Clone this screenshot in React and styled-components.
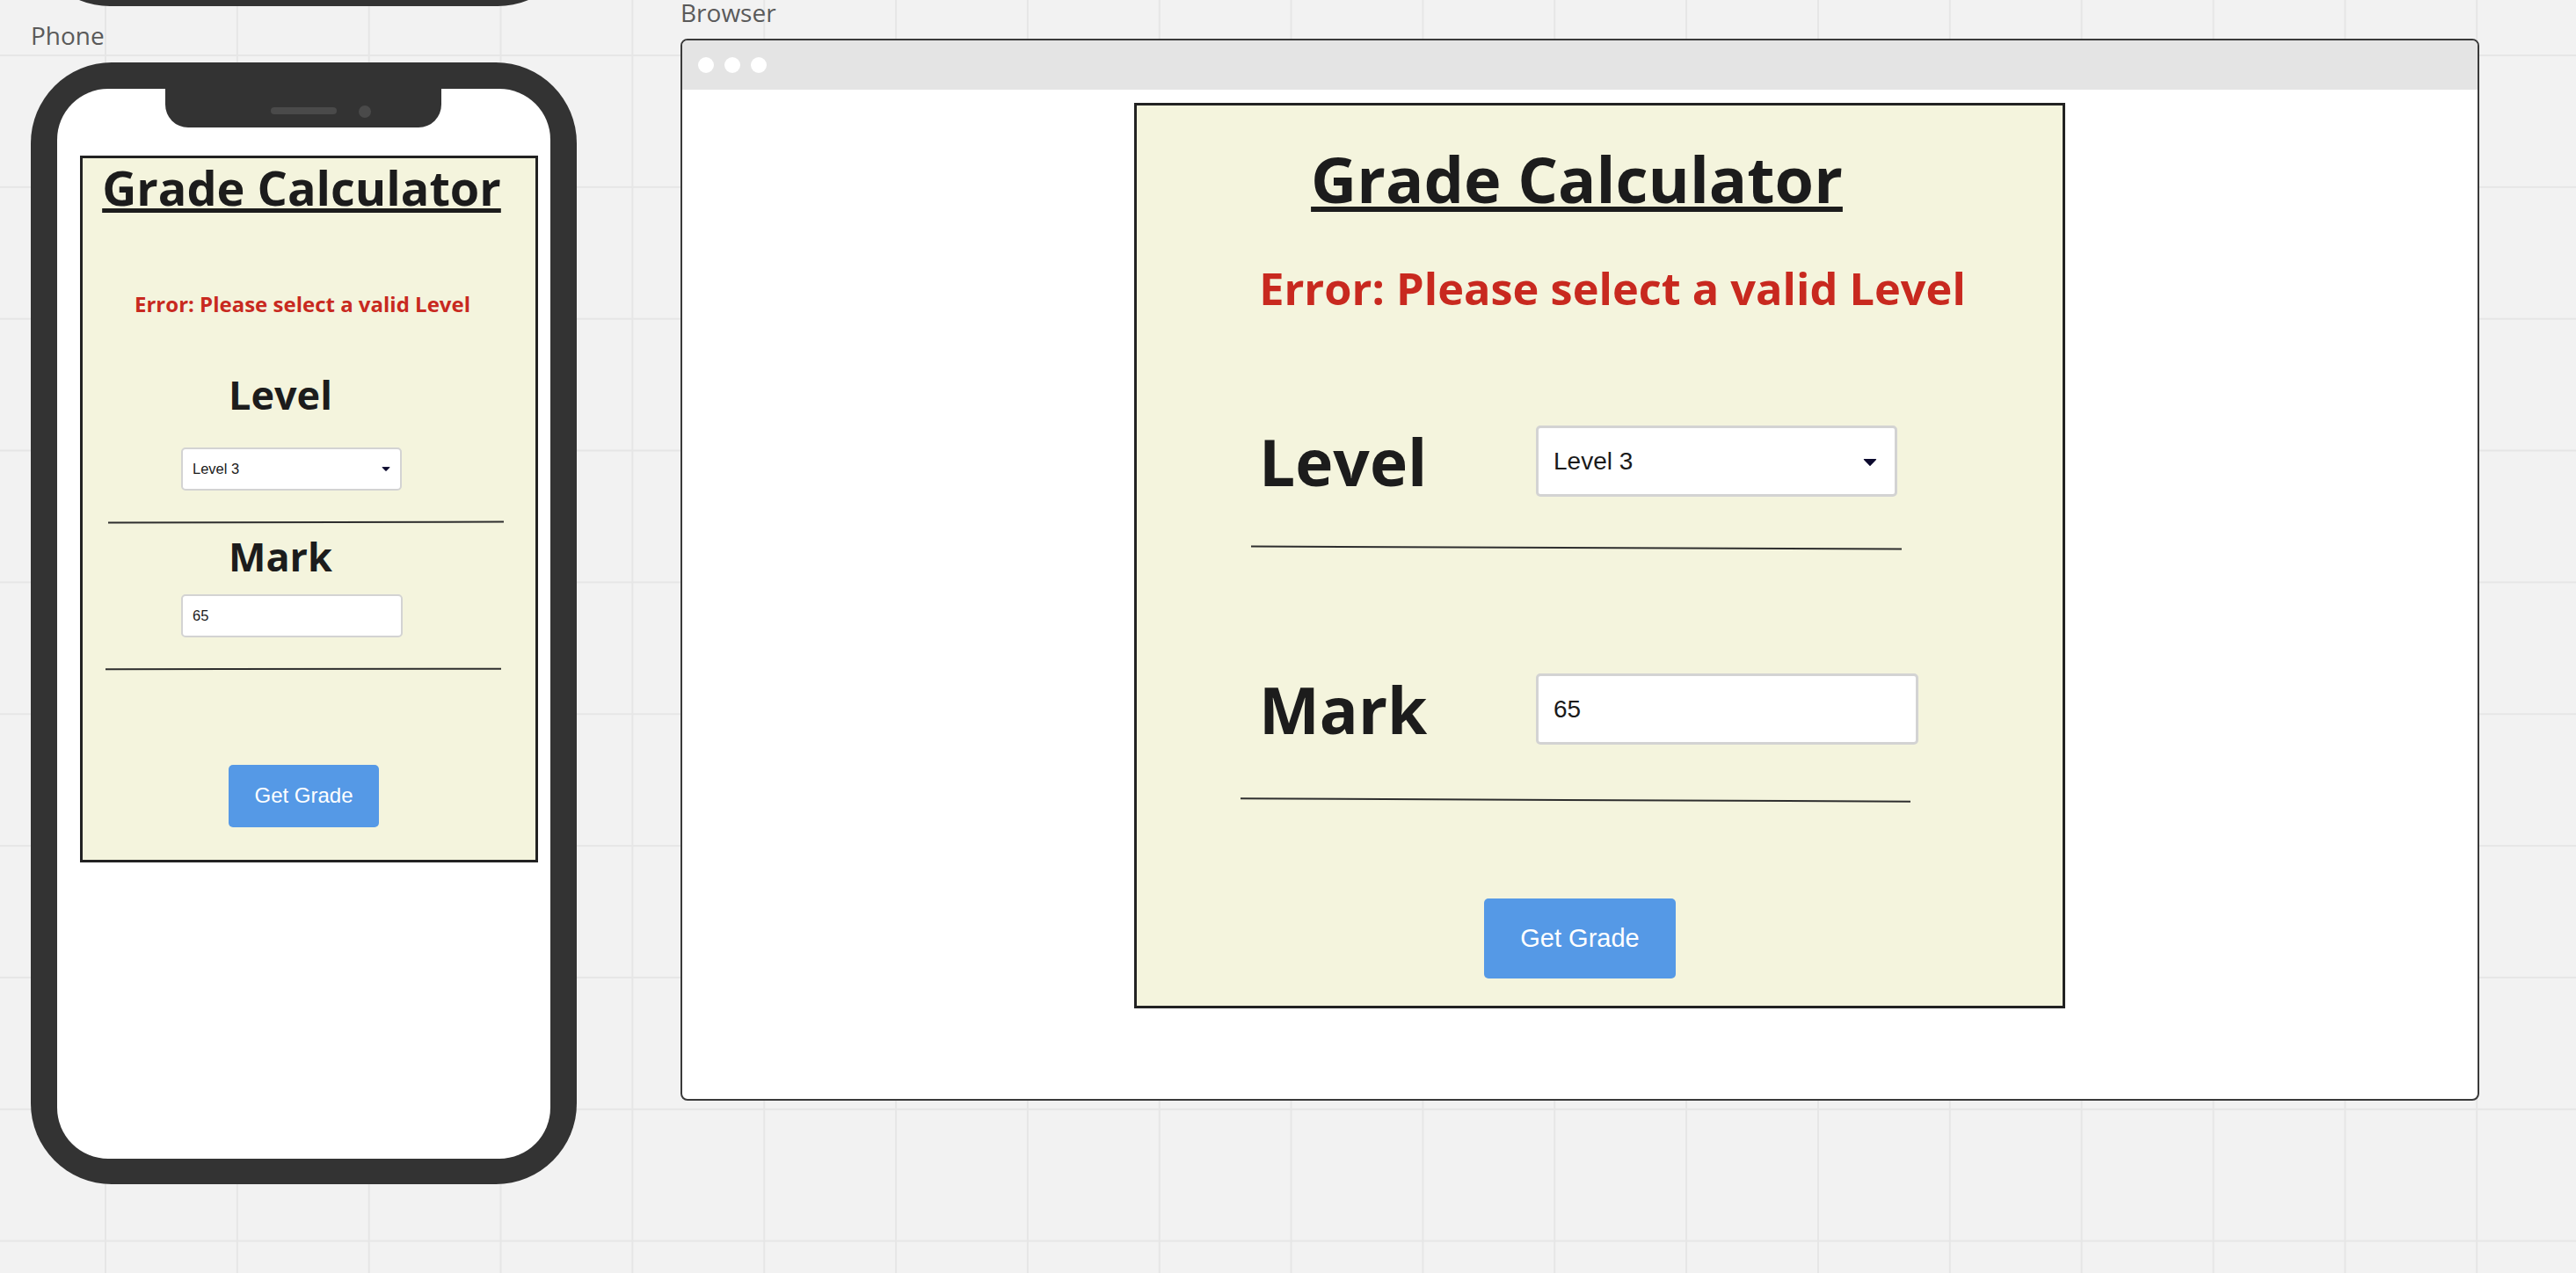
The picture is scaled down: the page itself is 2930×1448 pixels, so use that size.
import styled, { createGlobalStyle } from "styled-components";

const GlobalStyle = createGlobalStyle`
  html, body {
    margin: 0;
    padding: 0;
  }
  body {
    width: 2930px;
    height: 1448px;
    overflow: hidden;
    background-color: #f2f2f2;
    background-image: linear-gradient(to right, #e6e6e6 2px, transparent 2px),
      linear-gradient(to bottom, #e6e6e6 2px, transparent 2px);
    background-size: 149.85px 149.85px;
    background-position: 119px 62px;
    font-family: "Open Sans", "Noto Sans", sans-serif;
  }
`;

// sizes for the two copies of the form (phone mockup / browser mockup)
const PHONE = {
  cardW: 521,
  cardH: 804,
  cardLeft: 26,
  cardTop: 32,
  border: 3,
  title: { size: 54, lh: 60, top: 3, padL: 0, padR: 17, ul: 4.5, off: 3 },
  error: { size: 24, lh: 30, top: 88, padL: 0, padR: 15 },
  labelSize: 45,
  ctrl: { font: 16.5, border: 2, padL: 11, caretW: 10, caretH: 6, caretR: 13 },
  level: { top: 63, stacked: true, labelLeft: 166, labelLh: 50, gap: 34.5, ctrlLeft: 112, w: 251, h: 49 },
  div1: { top: 35, left: 29, w: 450, tilt: -0.1 },
  mark: { top: 13.5, stacked: true, labelLeft: 166, labelLh: 50, gap: 17.5, ctrlLeft: 112, w: 252, h: 49 },
  div2: { top: 35, left: 26, w: 450, tilt: -0.05 },
  button: { top: 108, left: 166, w: 171, h: 71, font: 24 },
};

const BROWSER = {
  cardW: 1059,
  cardH: 1030,
  cardLeft: 514,
  cardTop: 15,
  border: 3,
  title: { size: 72, lh: 90, top: 38, padL: 0, padR: 52, ul: 6, off: 4 },
  error: { size: 50.5, lh: 60, top: 50, padL: 29, padR: 0 },
  labelSize: 73,
  ctrl: { font: 28, border: 3, padL: 17, caretW: 16, caretH: 9, caretR: 23 },
  level: { top: 126, stacked: false, labelLeft: 139, labelW: 315, w: 411, h: 81 },
  div1: { top: 57, left: 130, w: 740, tilt: 0.22 },
  mark: { top: 142, stacked: false, labelLeft: 139, labelW: 315, w: 435, h: 81 },
  div2: { top: 62, left: 118, w: 762, tilt: 0.26 },
  button: { top: 111, left: 395, w: 218, h: 91, font: 29 },
};

const Canvas = styled.div`
  display: flex;
  align-items: flex-start;
`;

const Column = styled.div`
  display: flex;
  flex-direction: column;
  align-items: flex-start;
  margin-left: ${(p) => p.$left}px;
`;

const FrameLabel = styled.div`
  margin-top: ${(p) => p.$top}px;
  height: 24px;
  font-family: "Open Sans", sans-serif;
  font-size: 28px;
  line-height: 24px;
  color: #5a5a5a;
`;

const StubDevice = styled.div`
  width: 621px;
  height: 200px;
  margin-top: -193px;
  background: #333333;
  border-radius: 0 0 90px 90px;
`;

const PhoneBody = styled.div`
  box-sizing: border-box;
  width: 621px;
  height: 1276px;
  margin-top: 19px;
  padding: 30px 30px 29px 30px;
  background: #333333;
  border-radius: 92px;
`;

const Screen = styled.div`
  height: 100%;
  display: flex;
  flex-direction: column;
  align-items: flex-start;
  background: #ffffff;
  border-radius: 58px;
`;

const Notch = styled.div`
  box-sizing: border-box;
  width: 314px;
  height: 44px;
  margin-left: 123px;
  padding: 5px 0 0 120px;
  display: flex;
  align-items: center;
  gap: 25px;
  background: #333333;
  border-radius: 0 0 26px 26px;
`;

const Speaker = styled.span`
  width: 75px;
  height: 8px;
  border-radius: 4px;
  background: #4a4a4a;
`;

const Camera = styled.span`
  width: 14px;
  height: 14px;
  margin-top: 3px;
  border-radius: 50%;
  background: #4a4a4a;
`;

const BrowserWindow = styled.div`
  box-sizing: border-box;
  width: 2046px;
  height: 1208px;
  margin-top: 18px;
  display: flex;
  flex-direction: column;
  background: #ffffff;
  border: 2px solid #3a3a3a;
  border-radius: 8px;
  overflow: hidden;
`;

const TitleBar = styled.div`
  height: 56px;
  flex: none;
  display: flex;
  align-items: center;
  gap: 12px;
  padding-left: 18px;
  background: #e4e4e4;
`;

const Dot = styled.span`
  width: 18px;
  height: 18px;
  border-radius: 50%;
  background: #ffffff;
`;

const Viewport = styled.div`
  flex: 1;
  display: flex;
  flex-direction: column;
  align-items: flex-start;
`;

const Card = styled.div`
  box-sizing: border-box;
  width: ${(p) => p.$m.cardW}px;
  height: ${(p) => p.$m.cardH}px;
  margin: ${(p) => p.$m.cardTop}px 0 0 ${(p) => p.$m.cardLeft}px;
  display: flex;
  flex-direction: column;
  align-items: flex-start;
  background: #f4f4dd;
  border: ${(p) => p.$m.border}px solid #222222;
`;

const Title = styled.h1`
  align-self: stretch;
  margin: ${(p) => p.$t.top}px 0 0;
  padding: 0 ${(p) => p.$t.padR}px 0 ${(p) => p.$t.padL}px;
  font-family: "Open Sans", sans-serif;
  font-weight: 700;
  font-size: ${(p) => p.$t.size}px;
  line-height: ${(p) => p.$t.lh}px;
  text-align: center;
  white-space: nowrap;
  color: #1c1c1c;
  text-decoration: underline;
  text-decoration-thickness: ${(p) => p.$t.ul}px;
  text-underline-offset: ${(p) => p.$t.off}px;
`;

const ErrorText = styled.p`
  align-self: stretch;
  margin: ${(p) => p.$e.top}px 0 0;
  padding: 0 ${(p) => p.$e.padR}px 0 ${(p) => p.$e.padL}px;
  font-family: "Open Sans", sans-serif;
  font-weight: 700;
  font-size: ${(p) => p.$e.size}px;
  line-height: ${(p) => p.$e.lh}px;
  text-align: center;
  white-space: nowrap;
  color: #c8291f;
`;

const FieldRow = styled.div`
  margin-top: ${(p) => p.$f.top}px;
  display: flex;
  flex-direction: ${(p) => (p.$f.stacked ? "column" : "row")};
  align-items: ${(p) => (p.$f.stacked ? "flex-start" : "center")};
  padding-left: ${(p) => (p.$f.stacked ? 0 : p.$f.labelLeft)}px;
`;

const FieldLabel = styled.label`
  box-sizing: border-box;
  width: ${(p) => (p.$f.stacked ? "auto" : `${p.$f.labelW}px`)};
  margin-left: ${(p) => (p.$f.stacked ? p.$f.labelLeft : 0)}px;
  font-family: "Open Sans", sans-serif;
  font-weight: 700;
  font-size: ${(p) => p.$size}px;
  line-height: ${(p) => (p.$f.stacked ? `${p.$f.labelLh}px` : 1)};
  color: #1c1c1c;
`;

const Control = styled.div`
  position: relative;
  width: ${(p) => p.$f.w}px;
  height: ${(p) => p.$f.h}px;
  margin: ${(p) => (p.$f.stacked ? p.$f.gap : 0)}px 0 0
    ${(p) => (p.$f.stacked ? p.$f.ctrlLeft : 0)}px;
`;

const fieldStyle = (p) => `
  box-sizing: border-box;
  width: 100%;
  height: 100%;
  margin: 0;
  padding: 0 0 0 ${p.$c.padL}px;
  appearance: none;
  outline: none;
  background: #ffffff;
  border: ${p.$c.border}px solid #d3d3d3;
  border-radius: 5px;
  font-family: "Liberation Sans", Arial, sans-serif;
  font-size: ${p.$c.font}px;
  color: #1a1a1a;
`;

const Select = styled.select`
  ${fieldStyle}
`;

const TextInput = styled.input`
  ${fieldStyle}
`;

const Caret = styled.svg`
  position: absolute;
  top: 50%;
  right: ${(p) => p.$c.caretR}px;
  transform: translateY(-40%);
  pointer-events: none;
`;

const Divider = styled.hr`
  box-sizing: border-box;
  width: ${(p) => p.$d.w}px;
  height: 2px;
  margin: ${(p) => p.$d.top}px 0 0 ${(p) => p.$d.left}px;
  border: none;
  background: #2e2e2e;
  transform: rotate(${(p) => p.$d.tilt}deg);
`;

const GradeButton = styled.button`
  width: ${(p) => p.$b.w}px;
  height: ${(p) => p.$b.h}px;
  margin: ${(p) => p.$b.top}px 0 0 ${(p) => p.$b.left}px;
  padding: 0;
  border: none;
  border-radius: 5px;
  background: #5599e6;
  color: #ffffff;
  font-family: "Liberation Sans", Arial, sans-serif;
  font-size: ${(p) => p.$b.font}px;
  cursor: pointer;
`;

function GradeCard({ m }) {
  return (
    <Card $m={m}>
      <Title $t={m.title}>Grade Calculator</Title>
      <ErrorText $e={m.error}>Error: Please select a valid Level</ErrorText>
      <FieldRow $f={m.level}>
        <FieldLabel $f={m.level} $size={m.labelSize}>
          Level
        </FieldLabel>
        <Control $f={m.level}>
          <Select $c={m.ctrl} defaultValue="3">
            <option value="1">Level 1</option>
            <option value="2">Level 2</option>
            <option value="3">Level 3</option>
          </Select>
          <Caret
            $c={m.ctrl}
            width={m.ctrl.caretW}
            height={m.ctrl.caretH}
            viewBox="0 0 16 9"
          >
            <path
              d="M1.5 1.2 H14.5 L8 7.8 Z"
              fill="#0c0a2e"
              stroke="#0c0a2e"
              strokeWidth="1.4"
              strokeLinejoin="round"
            />
          </Caret>
        </Control>
      </FieldRow>
      <Divider $d={m.div1} />
      <FieldRow $f={m.mark}>
        <FieldLabel $f={m.mark} $size={m.labelSize}>
          Mark
        </FieldLabel>
        <Control $f={m.mark}>
          <TextInput $c={m.ctrl} defaultValue="65" />
        </Control>
      </FieldRow>
      <Divider $d={m.div2} />
      <GradeButton $b={m.button}>Get Grade</GradeButton>
    </Card>
  );
}

export default function App() {
  return (
    <>
      <GlobalStyle />
      <Canvas>
        <Column $left={35}>
          <StubDevice />
          <FrameLabel $top={21}>Phone</FrameLabel>
          <PhoneBody>
            <Screen>
              <Notch>
                <Speaker />
                <Camera />
              </Notch>
              <GradeCard m={PHONE} />
            </Screen>
          </PhoneBody>
        </Column>
        <Column $left={118}>
          <FrameLabel $top={2}>Browser</FrameLabel>
          <BrowserWindow>
            <TitleBar>
              <Dot />
              <Dot />
              <Dot />
            </TitleBar>
            <Viewport>
              <GradeCard m={BROWSER} />
            </Viewport>
          </BrowserWindow>
        </Column>
      </Canvas>
    </>
  );
}
